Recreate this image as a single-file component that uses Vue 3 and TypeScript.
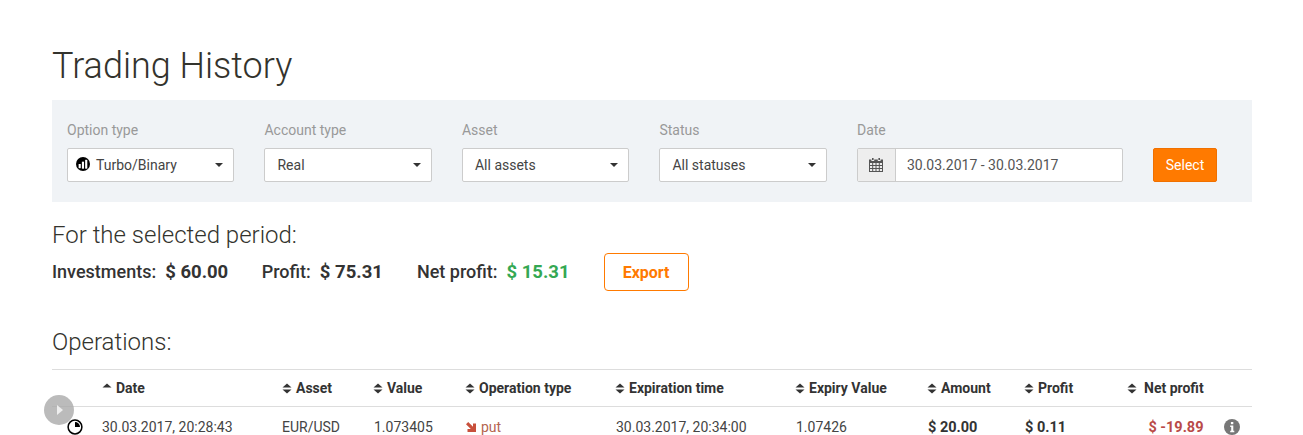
<script setup lang="ts">
interface Filter { label: string; value: string; icon?: boolean }
const filters: Filter[] = [
  { label: 'Option type', value: 'Turbo/Binary', icon: true },
  { label: 'Account type', value: 'Real' },
  { label: 'Asset', value: 'All assets' },
  { label: 'Status', value: 'All statuses' },
]
const totals = [
  { label: 'Investments:', value: '$ 60.00', cls: '' },
  { label: 'Profit:', value: '$ 75.31', cls: '' },
  { label: 'Net profit:', value: '$ 15.31', cls: 'green' },
]
const heads = ['Date', 'Asset', 'Value', 'Operation type', 'Expiration time', 'Expiry Value', 'Amount', 'Profit', 'Net profit']
</script>

<template>
  <main class="page">
    <h1 class="title">Trading History</h1>
    <section class="filters">
      <div v-for="f in filters" :key="f.label" class="field">
        <label class="label">{{ f.label }}</label>
        <div class="select" :class="{ 'with-icon': f.icon }">
          <svg v-if="f.icon" class="type-icon" width="14" height="14" viewBox="0 0 15 15">
            <circle cx="7.5" cy="7.5" r="7.5" fill="#000" />
            <rect x="2.8" y="7.5" width="2.3" height="4.5" fill="#fff" />
            <rect x="6.3" y="5" width="2.3" height="7.5" fill="#fff" />
            <rect x="9.8" y="3" width="2.3" height="9.5" fill="#fff" />
          </svg>
          <span>{{ f.value }}</span>
          <i class="caret"></i>
        </div>
      </div>
      <div class="field date-field">
        <label class="label">Date</label>
        <div class="date">
          <span class="addon">
            <svg width="14" height="14" viewBox="0 0 14 14" fill="#555">
              <path d="M3 0h1.6v2H3zM9.4 0H11v2H9.4zM0 1.5h2.4v1.4h2.8V1.5h3.6v1.4h2.8V1.5H14V14H0zM1 5v2h2.2V5zm3.2 0v2h2.3V5zm3.3 0v2h2.3V5zm3.3 0v2H13V5zM1 8v2h2.2V8zm3.2 0v2h2.3V8zm3.3 0v2h2.3V8zm3.3 0v2H13V8zM1 11v2h2.2v-2zm3.2 0v2h2.3v-2zm3.3 0v2h2.3v-2zm3.3 0v2H13v-2z" fill-rule="evenodd" />
            </svg>
          </span>
          <span class="date-value">30.03.2017 - 30.03.2017</span>
        </div>
      </div>
      <button class="select-btn">Select</button>
    </section>

    <h2 class="sub period">For the selected period:</h2>
    <div class="totals">
      <div v-for="t in totals" :key="t.label" class="total">
        <span>{{ t.label }}</span>
        <b class="amount" :class="t.cls">{{ t.value }}</b>
      </div>
      <button class="export">Export</button>
    </div>

    <h2 class="sub ops">Operations:</h2>
    <section class="table">
      <div class="row head">
        <div v-for="(h, i) in heads" :key="h" class="th" :class="{ wide: i === 8 }">
          <svg class="sort" width="10" height="11" viewBox="0 0 10 11">
            <path d="M5 .5 9.5 4.5H.5z" fill="#333" />
            <path v-if="i !== 0" d="M5 10.5.5 6.5h9z" fill="#333" />
          </svg>
          <span>{{ h }}</span>
        </div>
      </div>
      <div class="row body">
        <div class="td">30.03.2017, 20:28:43</div>
        <div class="td">EUR/USD</div>
        <div class="td">1.073405</div>
        <div class="td put">
          <svg width="10" height="10" viewBox="0 0 10 10"><path d="M0 2.2 2.2 0 7 4.8V1.5h3V10H1.5V7h3.3z" fill="#c8503c" /></svg>
          <span>put</span>
        </div>
        <div class="td">30.03.2017, 20:34:00</div>
        <div class="td">1.07426</div>
        <div class="td strong">$ 20.00</div>
        <div class="td strong">$ 0.11</div>
        <div class="td strong loss">$ -19.89</div>
        <svg class="info" width="16" height="16" viewBox="0 0 16 16">
          <circle cx="8" cy="8" r="8" fill="#777" />
          <rect x="6.9" y="3" width="2.4" height="2.2" fill="#fff" />
          <path d="M6.2 6.6h3.1v5.2h1v1.4H6.2v-1.4h1V8H6.2z" fill="#fff" />
        </svg>
      </div>
      <div class="play"><i></i></div>
      <svg class="clock" width="16" height="16" viewBox="0 0 16 16">
        <circle cx="8" cy="8" r="6.9" fill="#fff" stroke="#000" stroke-width="1.5" />
        <path d="M8 8V3A5 5 0 0 1 13 8z" fill="#000" />
      </svg>
    </section>
  </main>
</template>

<style>
html, body { margin: 0; overflow: hidden; background: #fff; }
</style>

<style scoped>
.page {
  width: 1200px;
  margin-left: 52px;
  height: 435px;
  font-family: Roboto, "Liberation Sans", sans-serif;
  color: #333;
}
.title {
  margin: 0;
  padding-top: 43px;
  height: 57px;
  box-sizing: content-box;
  font-size: 36px;
  line-height: 46px;
  font-weight: 300;
  color: #33332d;
}
.filters {
  display: flex;
  height: 102px;
  box-sizing: border-box;
  padding: 20px 15px 0;
  background: #f0f3f6;
  gap: 30.1px;
}
.field { width: 167.4px; flex: none; }
.date-field { width: 266px; }
.label {
  display: block;
  height: 28px;
  font-size: 14px;
  line-height: 20px;
  color: #999;
}
.select {
  height: 34px;
  box-sizing: border-box;
  display: flex;
  align-items: center;
  padding: 0 12px;
  background: #fff;
  border: 1px solid #ccc;
  border-radius: 2px;
  font-size: 14px;
  color: #444;
}
.select.with-icon { padding-left: 8px; }
.type-icon { margin-right: 6px; margin-top: -2px; }
.caret {
  margin-left: auto;
  margin-right: -2px;
  border-left: 4px solid transparent;
  border-right: 4px solid transparent;
  border-top: 4px solid #333;
}
.date {
  height: 34px;
  box-sizing: border-box;
  display: flex;
  background: #fff;
  border: 1px solid #ccc;
  border-radius: 2px;
}
.addon {
  width: 37px;
  flex: none;
  display: flex;
  align-items: center;
  justify-content: center;
  background: #eee;
  border-right: 1px solid #ccc;
}
.date-value {
  padding-left: 11px;
  font-size: 14px;
  line-height: 32px;
  color: #555;
}
.select-btn {
  align-self: flex-start;
  margin-top: 28px;
  width: 64px;
  height: 34px;
  padding: 0;
  background: #ff7a00;
  border: 1px solid #f07000;
  border-radius: 2px;
  color: #fff;
  font: 14px Roboto, sans-serif;
}
.sub {
  margin: 0;
  font-size: 24px;
  line-height: 28px;
  font-weight: 300;
  color: #33332d;
}
.period { margin-top: 19px; }
.totals {
  display: flex;
  align-items: center;
  height: 38px;
  margin-top: 4px;
  font-size: 18px;
  font-weight: 500;
  color: #333;
}
.total { margin-right: 34px; display: flex; align-items: baseline; gap: 9px; }
.total:first-child { margin-right: 33.5px; }
.amount { font-size: 18.5px; font-weight: 700; }
.green { color: #34a853; }
.export {
  width: 85px;
  height: 38px;
  padding: 0;
  background: #fff;
  border: 1px solid #ff7a00;
  border-radius: 4px;
  color: #ff7a00;
  font: 700 16px Roboto, sans-serif;
}
.ops { margin-top: 37px; }
.table { position: relative; margin-top: 13px; border-top: 1px solid #ddd; }
.row {
  display: grid;
  grid-template-columns: 180px 92px 92px 150px 180px 132px 97px 103px 75.5px 1fr;
  padding-left: 50px;
  align-items: center;
}
.head {
  height: 36px;
  grid-template-columns: 180px 91px 92px 150px 180px 132px 97px 103px 79px 1fr;
  border-bottom: 1px solid #ddd;
  font-size: 14px;
  font-weight: 700;
  color: #333;
}
.th { display: flex; align-items: center; gap: 4px; white-space: nowrap; }
.th.wide { gap: 7px; }
.sort { flex: none; }
.body { height: 40px; font-size: 14px; color: #444; }
.td { white-space: nowrap; }
.put { display: flex; align-items: center; gap: 5px; color: #b5654f; }
.strong { font-weight: 700; font-size: 14.5px; color: #333; }
.loss { color: #b94a48; text-align: right; }
.info { justify-self: end; margin-right: 12px; }
.play {
  position: absolute;
  left: -8px;
  top: 25px;
  width: 30px;
  height: 30px;
  border-radius: 50%;
  background: rgba(170, 170, 170, 0.8);
  display: flex;
  align-items: center;
  justify-content: center;
}
.play i {
  margin-left: 2px;
  border-left: 6px solid #eee;
  border-top: 5px solid transparent;
  border-bottom: 5px solid transparent;
}
.clock { position: absolute; left: 15px; top: 49px; }
</style>
